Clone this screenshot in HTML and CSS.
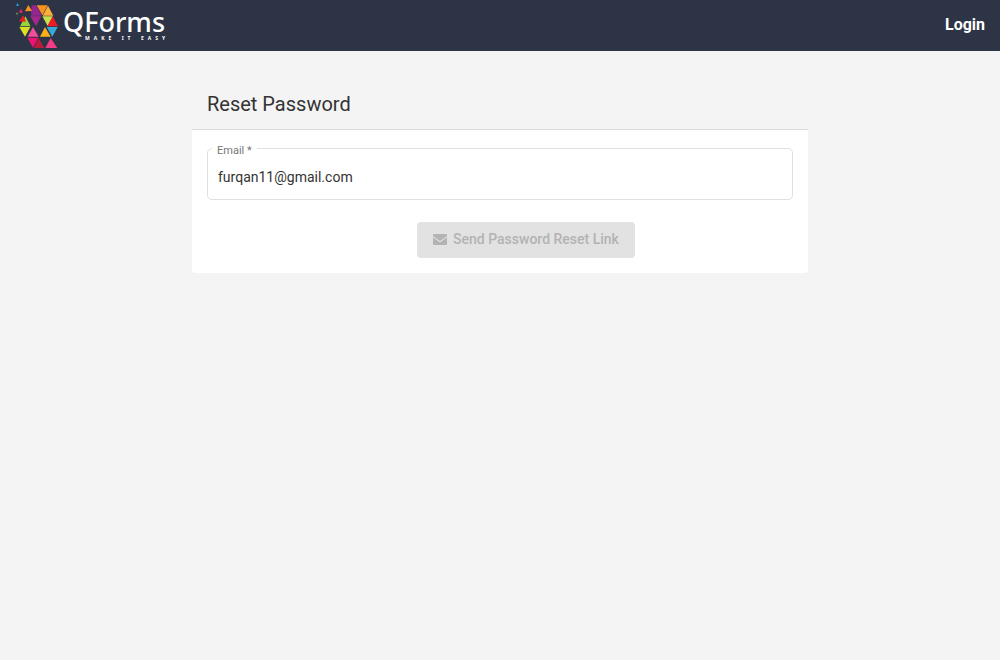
FILE: index.html
```html
<!DOCTYPE html>
<html lang="en">
<head>
<meta charset="utf-8">
<meta name="viewport" content="width=device-width, initial-scale=1">
<title>Reset Password - QForms</title>
<link rel="stylesheet" href="styles.css">
</head>
<body>
<header class="topbar">
  <a class="brand" href="#" aria-label="QForms">
    <svg class="brand-mark" viewBox="0 0 141 156" aria-hidden="true">
      <path fill="#f7931e" d="M65 16H98L82 46Z"/>
      <path fill="#fbb03b" d="M99 17L115 47H83Z"/>
      <path fill="#93278f" d="M50 16H64L80 47H48Z"/>
      <path fill="#a6288f" d="M46 49H79L63 78Z"/>
      <path fill="#c6e04b" d="M82 49H114L98 78Z"/>
      <path fill="#ed1c24" d="M113 49L129 79H97Z"/>
      <path fill="#9bd33b" d="M31 49L47 79H15Z"/>
      <path fill="#d9e021" d="M13 81H46L30 110Z"/>
      <path fill="#f04e9b" d="M54 81L71 110H38Z"/>
      <path fill="#fbb01b" d="M90 81L107 110H75Z"/>
      <path fill="#36a9d6" d="M95 81H128L112 110Z"/>
      <path fill="#ed1173" d="M37 113H70L54 143Z"/>
      <path fill="#b71c3c" d="M71 114L88 144H56Z"/>
      <path fill="#f43b86" d="M107 114L127 144H91Z"/>
      <path fill="#f7931e" d="M40 15L51 33L30 34Z"/>
      <path fill="#ed1c24" d="M25 46L33 65L12 64Z"/>
      <path fill="#e91e78" d="M18 26L24 38H11Z"/>
      <path fill="#29abe2" d="M8 9L12 17H3Z"/>
      <path fill="#8cc63f" d="M6 37L9 43H3Z"/>
    </svg>
    <span class="brand-text">
      <span class="brand-name">QForms</span>
      <span class="brand-tagline"><span>MAKE</span><span>IT</span><span>EASY</span></span>
    </span>
  </a>
  <a class="login" href="#">Login</a>
</header>
<main class="panel">
  <h1 class="panel-title">Reset Password</h1>
  <form class="panel-body">
    <div class="field">
      <label class="field-label" for="email">Email *</label>
      <input class="field-input" id="email" type="email" value="furqan11@gmail.com" required>
    </div>
    <div class="actions">
      <button class="submit" type="submit" disabled>
        <svg class="submit-icon" viewBox="0 0 14 11" aria-hidden="true">
          <path fill="currentColor" d="M1 0H13Q14 0 14 1V2L8 6.500Q7 7.200 6 6.500L0 2V1Q0 0 1 0ZM0 3.300L5.500 7.400Q7 8.400 8.500 7.400L14 3.300V10Q14 11 13 11H1Q0 11 0 10Z"/>
        </svg>
        Send Password Reset Link
      </button>
    </div>
  </form>
</main>
</body>
</html>
```
FILE: styles.css
```css
* { box-sizing: border-box; }

body {
  margin: 0;
  background: #f4f4f4;
  color: #333;
  font-family: Roboto, "Liberation Sans", sans-serif;
  font-size: 14px;
}

.topbar {
  display: flex;
  align-items: center;
  justify-content: space-between;
  height: 51px;
  padding: 0 15px;
  background: #2d3446;
}

.brand {
  display: flex;
  align-items: center;
  gap: 1px;
  color: #fff;
  text-decoration: none;
}

.brand-mark { width: 47px; height: 52px; }

.brand-text {
  display: flex;
  flex-direction: column;
  padding-bottom: 4px;
}

.brand-name {
  font-family: "Noto Sans", sans-serif;
  font-size: 27px;
  font-weight: 500;
  line-height: 28px;
}

.brand-tagline {
  display: flex;
  justify-content: space-between;
  margin-left: 22px;
  font-family: "Noto Sans", sans-serif;
  font-size: 5px;
  font-weight: 700;
  letter-spacing: 4px;
  line-height: 4px;
  margin-right: -4px;
}

.login {
  padding-bottom: 2px;
  color: #fff;
  font-size: 16px;
  font-weight: 700;
  line-height: 24px;
  text-decoration: none;
}

.panel {
  max-width: 616px;
  margin: 28px auto 0;
}

.panel-title {
  margin: 0;
  padding: 10px 15px;
  border-bottom: 1px solid #dcdcdc;
  font-size: 20px;
  font-weight: 400;
  line-height: 30px;
}

.panel-body {
  padding: 18px 15px 15px;
  border-radius: 0 0 4px 4px;
  background: #fff;
}

.field { position: relative; }

.field-label {
  position: absolute;
  top: -6px;
  left: 5px;
  padding: 0 5px;
  background: #fff;
  color: #777;
  font-size: 11px;
  line-height: 17px;
}

.field-input {
  display: block;
  width: 100%;
  height: 52px;
  padding: 6px 10px 0;
  border: 1px solid #e0e0e0;
  border-radius: 5px;
  background: #fff;
  color: #333;
  font: inherit;
}

.actions {
  display: flex;
  justify-content: center;
  padding: 22px 0 0 52px;
}

.submit {
  display: flex;
  align-items: center;
  gap: 6px;
  height: 36px;
  padding: 0 16px 2px;
  border: 0;
  border-radius: 4px;
  background: #e2e2e2;
  color: #b3b3b3;
  font: inherit;
  font-weight: 500;
}

.submit-icon { width: 14px; height: 11px; }
```
